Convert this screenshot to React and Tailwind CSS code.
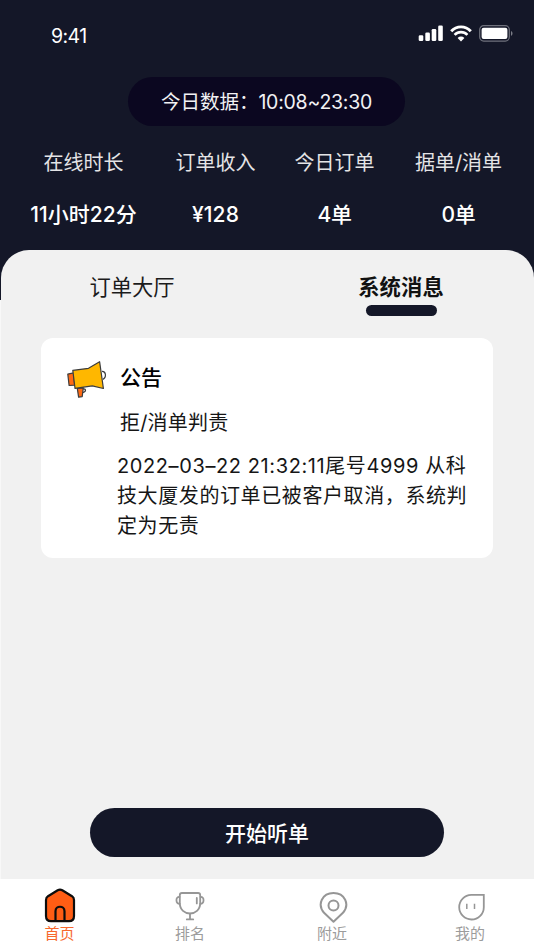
const stats = [
  { label: "在线时长", value: "11小时22分", tracking: "tracking-[0px]" },
  { label: "订单收入", value: "¥128", tracking: "tracking-[0.1px]" },
  { label: "今日订单", value: "4单", tracking: "tracking-[-0.3px]" },
  { label: "据单/消单", value: "0单", tracking: "tracking-[-0.3px]" },
];

const SignalIcon = () => (
  <svg width="26" height="17" viewBox="0 0 26 17" fill="white">
    <rect x="0.7" y="10.3" width="4.6" height="5.7" rx="1.3" />
    <rect x="7.3" y="7.5" width="4.6" height="8.5" rx="1.3" />
    <rect x="13.7" y="4" width="4.6" height="12" rx="1.3" />
    <rect x="20.2" y="0.5" width="4.6" height="15.5" rx="1.3" />
  </svg>
);

const WifiIcon = () => (
  <svg width="22" height="17" viewBox="0 0 22 17" fill="none" stroke="white">
    <path d="M1.2 6.2 C6.6 0.4 15.4 0.4 20.8 6.2" strokeWidth="2.9" />
    <path d="M4.6 9.9 C8.2 6.2 13.8 6.2 17.4 9.9" strokeWidth="2.7" />
    <path d="M7.6 12.9 C9.6 11.1 12.4 11.1 14.4 12.9 L11 16.4 Z" fill="white" stroke="none" />
  </svg>
);

const BatteryIcon = () => (
  <svg width="35" height="17" viewBox="0 0 35 17" fill="none">
    <rect x="0.7" y="0.7" width="29.6" height="15.4" rx="4" stroke="#6f717c" strokeWidth="1.2" />
    <rect x="2.6" y="2.7" width="25.8" height="11.2" rx="2" fill="white" />
    <path d="M32 6 C34 6.8 34 10 32 10.8 Z" fill="#7b7d87" />
  </svg>
);

const MegaphoneIcon = () => (
  <svg width="42" height="40" viewBox="0 0 42 40" fill="none" stroke="#3c3c3c" strokeWidth="1.2" strokeLinejoin="round">
    <path d="M36 11.3 C40 11 40.8 17.5 36.8 19.4" />
    <path d="M17 28.8 C20 28.5 20.8 31.5 16.5 32.6" />
    <path d="M11.3 28.3 L17.3 27.8 L16.2 36.6 L12.6 37.2 Z" fill="#ff6a13" />
    <path d="M1.8 14.1 L7.6 12.9 L8.6 25.1 L3.1 25.5 Z" fill="#ff6a13" />
    <path d="M6.8 10.4 L22.5 8.3 L33.6 1.7 L37.4 28.5 L26.3 25.8 L9 28.3 Z" fill="#ffb700" />
  </svg>
);

const HomeIcon = () => (
  <svg width="32" height="35" viewBox="0 0 32 35" fill="none" stroke="#0d0d0d" strokeWidth="2.2" strokeLinejoin="round">
    <path d="M13.7 2.2 Q16 0.9 18.3 2.2 L28 8.2 Q30 9.5 30 12 V28 Q30 33.2 25 33.2 H7 Q2 33.2 2 28 V12 Q2 9.5 4 8.2 Z" fill="#ff5d14" />
    <path d="M11.5 33 V23.3 C11.5 17.2 20.5 17.2 20.5 23.3 V33" />
  </svg>
);

const TrophyIcon = () => (
  <svg width="32" height="35" viewBox="0 0 32 35" fill="none" stroke="#969696" strokeWidth="1.8" strokeLinecap="round">
    <path d="M8 5 H24 Q26.2 5 26.2 7.2 V15 C26.2 29 5.8 29 5.8 15 V7.2 Q5.8 5 8 5 Z" />
    <path d="M5.5 8.8 C1.4 8.5 1.4 15.8 5.8 15.8" />
    <path d="M26.5 8.8 C30.6 8.5 30.6 15.8 26.2 15.8" />
    <path d="M22.8 10 V15.4 M16 25.7 V31.3 M12.8 31.4 H19.2" />
  </svg>
);

const PinIcon = () => (
  <svg width="32" height="35" viewBox="0 0 32 35" fill="none" stroke="#969696" strokeWidth="2">
    <path d="M16.5 33.7 L7.3 25.1 C-0.5 16.2 5.5 5 16.5 5 C27.5 5 33.5 16.2 25.7 25.1 Z" strokeLinejoin="round" />
    <circle cx="16.5" cy="17.5" r="5" />
  </svg>
);

const ProfileIcon = () => (
  <svg width="32" height="35" viewBox="0 0 32 35" fill="none" stroke="#969696" strokeWidth="1.8">
    <path d="M29.8 6.9 H17.3 A12.3 12.3 0 1 0 29.8 19.2 Z" />
    <path d="M12.8 15.8 V21 M20.5 15.8 V21" strokeWidth="1.5" />
  </svg>
);

const tabs = [
  { label: "首页", icon: HomeIcon, color: "text-[#f7682d]" },
  { label: "排名", icon: TrophyIcon, color: "text-[#9c9c9c]" },
  { label: "附近", icon: PinIcon, color: "text-[#9c9c9c] pr-px" },
  { label: "我的", icon: ProfileIcon, color: "text-[#9c9c9c]" },
];

const StatusBar = () => (
  <div className="flex h-[77px] items-start justify-between pt-6 pr-5 pl-[51px]">
    <span className="pt-px text-[19.5px] leading-[23px] tracking-[-0.6px]">9:41</span>
    <div className="flex pt-px">
      <SignalIcon />
      <div className="flex gap-[7px] pl-[6px]">
        <WifiIcon />
        <BatteryIcon />
      </div>
    </div>
  </div>
);

const Header = () => (
  <header className="h-[300px] bg-[#141728] text-white">
    <StatusBar />
    <div className="ml-32 flex h-[49px] w-[277px] items-center justify-center rounded-full bg-[#0b0720] pt-[3px] text-[19.5px] whitespace-nowrap text-[#f2f2f4]">
      今日数据：<span className="tracking-[-0.25px]">10:08~23:30</span>
    </div>
    <div className="grid grid-cols-[167px_97px_141px_107px] pt-[22px]">
      {stats.map((item) => (
        <div key={item.label} className="flex flex-col items-center whitespace-nowrap">
          <span className="text-[20px] leading-[30px] text-[#e4e4e6]">{item.label}</span>
          <span className={`mt-[22px] text-[21px] leading-[30px] font-medium ${item.tracking}`}>
            {item.value}
          </span>
        </div>
      ))}
    </div>
  </header>
);

const Notice = () => (
  <article className="ml-10 mt-[22px] flex h-[220px] w-[452px] rounded-xl bg-white pt-[22px] pl-[25px] text-[#161616]">
    <MegaphoneIcon />
    <div className="pt-px pl-[9px] whitespace-nowrap">
      <h2 className="pl-[3px] text-[21px] leading-[34px] font-medium text-black">公告</h2>
      <p className="mt-[13px] pl-[3px] text-[20px] leading-[30px] tracking-[0.2px]">拒/消单判责</p>
      <div className="mt-[13px] text-[20px] leading-[30px] tracking-[0.6px]">
        <p className="tracking-[0.6px]">2022–03–22 21:32:11尾号4999 从科</p>
        <p>技大厦发的订单已被客户取消，系统判</p>
        <p>定为无责</p>
      </div>
    </div>
  </article>
);

const BottomNav = () => (
  <nav className="grid h-[71px] grid-cols-[119px_142px_143px_130px] bg-white pt-[9px]">
    {tabs.map(({ label, icon: Icon, color }) => (
      <div key={label} className="flex flex-col items-center last:pl-[2px]">
        <Icon />
        <span className={`text-[15px] leading-[22px] ${color}`}>{label}</span>
      </div>
    ))}
  </nav>
);

export default function App() {
  return (
    <div className="flex h-[950px] w-[534px] flex-col overflow-hidden bg-[#f8f8f8] font-['Inter','Noto_Sans_CJK_SC',sans-serif]">
      <Header />
      <main className="-mt-[50px] ml-px flex h-[629px] flex-col rounded-t-[28px] bg-[#f1f1f1]">
        <div className="flex pt-[22px] text-[21.3px] leading-[30px]">
          <div className="w-[262px] text-center text-[#1c1c1c]">订单大厅</div>
          <div className="flex flex-1 flex-col items-center pl-[5px]">
            <span className="font-bold tracking-[0.1px] text-[#111]">系统消息</span>
            <span className="mt-[3px] h-[11px] w-[71px] rounded-full bg-[#141728]" />
          </div>
        </div>
        <Notice />
        <button className="mt-auto mb-[22px] ml-[89px] h-[49px] w-[354px] rounded-full bg-[#141728] pt-[2px] text-[21px] font-medium text-white">
          开始听单
        </button>
      </main>
      <BottomNav />
    </div>
  );
}
